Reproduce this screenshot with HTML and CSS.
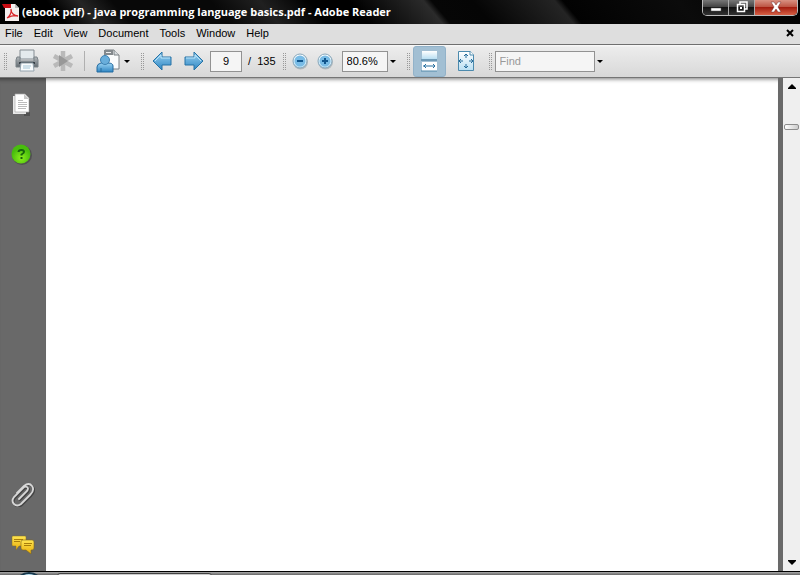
FILE: index.html
```html
<!DOCTYPE html>
<html lang="en">
<head>
<meta charset="utf-8">
<title>(ebook pdf) - java programming language basics.pdf - Adobe Reader</title>
<link rel="stylesheet" href="styles.css">
</head>
<body>
<svg class="defs" aria-hidden="true">
  <defs>
    <linearGradient id="blue" x1="0" y1="0" x2="0" y2="1"><stop offset="0" stop-color="#9bd3f3"/><stop offset="1" stop-color="#2f86c2"/></linearGradient>
    <linearGradient id="pale" x1="0" y1="0" x2="0" y2="1"><stop offset="0" stop-color="#ffffff"/><stop offset="1" stop-color="#b9dff3"/></linearGradient>
    <linearGradient id="gray" x1="0" y1="0" x2="0" y2="1"><stop offset="0" stop-color="#b4b9bc"/><stop offset="1" stop-color="#626a70"/></linearGradient>
    <linearGradient id="gold" x1="0" y1="0" x2="0" y2="1"><stop offset="0" stop-color="#ffe552"/><stop offset="1" stop-color="#e9ae09"/></linearGradient>
    <radialGradient id="green" cx="50%" cy="70%"><stop offset="0" stop-color="#8bef1c"/><stop offset="1" stop-color="#48bd0d"/></radialGradient>
  </defs>
</svg>
<div class="window">
  <header class="titlebar">
    <svg class="app-icon" width="18" height="18" viewBox="0 0 18 18" aria-hidden="true">
      <path d="M3 1h10l4 4v13H3z" fill="#f4eeee"/><path d="M13 1v4h4z" fill="#b9b9b9"/>
      <path d="M0 1h9v4H2z" fill="#c90d14"/>
      <path d="M5 15c2-1 5-5 4-9 0 4 3 7 7 7-4-1-7 0-11 2z" fill="none" stroke="#d8262b" stroke-width="1.3"/>
    </svg>
    <h1>(ebook pdf) - java programming language basics.pdf - Adobe Reader</h1>
    <div class="controls">
      <button class="min" aria-label="Minimize"><svg width="12" height="12"><path d="M1 7h10v3H1z" fill="#fff" stroke="#555" stroke-width=".5"/></svg></button>
      <button class="max" aria-label="Restore"><svg width="12" height="12"><path d="M4 3V1h7v7H9M1.500 3.500h7v7h-7z" fill="none" stroke="#fff" stroke-width="1.500"/><path d="M4 6h2v2H4z" fill="#fff"/></svg></button>
      <button class="close" aria-label="Close"><svg width="14" height="12"><path d="M2 1h3l2 3 2-3h3L9 6l3 5H9L7 8l-2 3H2l3-5z" fill="#fff" stroke="#733" stroke-width=".5"/></svg></button>
    </div>
  </header>

  <nav class="menubar">
    <button>File</button><button>Edit</button><button>View</button><button>Document</button><button>Tools</button><button>Window</button><button>Help</button>
    <button class="doc-close" aria-label="Close document"><svg width="8" height="8"><path d="M1 1l6 6M7 1L1 7" stroke="#000" stroke-width="2"/></svg></button>
  </nav>

  <div class="toolbar">
    <div class="group file">
      <span class="grip"></span>
      <button class="tool" aria-label="Print"><svg width="24" height="24" viewBox="0 0 24 24">
        <path d="M5 1h14v9H5z" fill="#e4eaed" stroke="#858d93"/>
        <path d="M2 8h3v4h14V8h3l1 3v7H1v-7z" fill="url(#gray)" stroke="#7b8388"/>
        <path d="M4 14h16" stroke="#394249" stroke-width="2"/>
        <path d="M6 14h12l1 8H5z" fill="#f9fcfd" stroke="#93a2ac"/><path d="M8 17h8M8 19h7" stroke="#a3c5d6"/></svg></button>
      <button class="tool" aria-label="Create"><svg width="24" height="24" viewBox="0 0 24 24">
        <path d="M12 2v20M3 7l18 10M21 7L3 17" stroke="#b9b9b9" stroke-width="4.500"/><path d="M8 6l9 6-9 6z" fill="#989898"/></svg></button>
      <span class="rule"></span>
      <button class="tool collab" aria-label="Collaborate"><svg width="24" height="24" viewBox="0 0 24 24">
        <path d="M9 1h9l5 5v14H9z" fill="#fafcfd" stroke="#7a8185"/><path d="M18 1v5h5" fill="#d7dcdf" stroke="#7a8185"/><path d="M8 1h9v5H8z" fill="#83898d"/><path d="M10 3.500h5" stroke="#eee"/>
        <path d="M1 23v-5q0-3 4-4h7q5 0 5 3v6z" fill="url(#blue)" stroke="#226aa0"/><circle cx="9" cy="11" r="4.500" fill="#69aedb" stroke="#3f82b2"/><path d="M5 19v4" stroke="#246a9d"/></svg><i class="caret"></i></button>
    </div>
    <div class="group nav">
      <span class="grip"></span>
      <button class="tool arrow" aria-label="Previous page"><svg width="20" height="20" viewBox="0 0 20 20"><path d="M1 10l9-9v5h9v8h-9v5z" fill="url(#blue)" stroke="#2673a6" stroke-linejoin="round"/><path d="M3 10l6-6v3h9" fill="none" stroke="#b9e3f8"/></svg></button>
      <button class="tool arrow" aria-label="Next page"><svg width="20" height="20" viewBox="0 0 20 20"><path d="M19 10l-9-9v5H1v8h9v5z" fill="url(#blue)" stroke="#2673a6" stroke-linejoin="round"/><path d="M2 7h9V4l6 6" fill="none" stroke="#b9e3f8"/></svg></button>
      <input class="field page" aria-label="Page number" value="9">
      <span class="total">/&nbsp; 135</span>
    </div>
    <div class="group zoom">
      <span class="grip"></span>
      <button class="tool round" aria-label="Zoom out"><svg width="18" height="18" viewBox="0 0 18 18"><circle cx="9.500" cy="10" r="7.500" fill="#b3b9bd"/><circle cx="9" cy="9" r="7" fill="url(#pale)" stroke="#86a7bb"/><circle cx="9" cy="9" r="5.500" fill="#79bce6"/><path d="M6 9h6" stroke="#11568d" stroke-width="2"/></svg></button>
      <button class="tool round" aria-label="Zoom in"><svg width="18" height="18" viewBox="0 0 18 18"><circle cx="9.500" cy="10" r="7.500" fill="#b3b9bd"/><circle cx="9" cy="9" r="7" fill="url(#pale)" stroke="#86a7bb"/><circle cx="9" cy="9" r="5.500" fill="#79bce6"/><path d="M6 9h6M9 6v6" stroke="#11568d" stroke-width="2"/></svg></button>
      <input class="field percent" aria-label="Zoom level" value="80.6%">
      <button class="drop" aria-label="Zoom levels"><i class="caret"></i></button>
    </div>
    <div class="group view">
      <span class="grip"></span>
      <button class="tool active" aria-label="Scrolling pages" aria-pressed="true"><svg width="20" height="22" viewBox="0 0 20 22"><path d="M3 1h15v8H3z" fill="url(#pale)"/><path d="M2 10h16" stroke="#397396"/><path d="M3 12h15v9H3z" fill="#fff"/><path d="M2 21h16" stroke="#5289aa"/><path d="M4 16h12M7 14l-2 2 2 2M14 14l2 2-2 2" fill="none" stroke="#266f9f"/></svg></button>
      <button class="tool fit" aria-label="Fit one page"><svg width="20" height="22" viewBox="0 0 20 22"><path d="M2.500 1.500h12l3 3v16h-15z" fill="url(#pale)" stroke="#4c8aad"/><path d="M14 1v4h4" fill="#fff" stroke="#4c8aad"/><path d="M10 4v4M8 6l2-2 2 2M10 18v-4M8 16l2 2 2-2M3 11h4M5 9l-2 2 2 2M17 11h-4M15 9l2 2-2 2" fill="none" stroke="#246b99"/></svg></button>
    </div>
    <div class="group find">
      <span class="grip"></span>
      <input class="field search" aria-label="Find" placeholder="Find">
      <button class="drop" aria-label="Find options"><i class="caret"></i></button>
    </div>
  </div>

  <main class="workspace">
    <aside class="sidebar">
      <button aria-label="Pages"><svg width="24" height="24" viewBox="0 0 24 24"><path d="M4 7h9v17h6V7" fill="#515151"/><path d="M2 4h13v18H2z" fill="#e8e8e8"/><path d="M4 2h10l4 4v14H4z" fill="#fff" stroke="#aaa" stroke-width=".7"/><path d="M13 2v5h5z" fill="#c6c6c6"/><path d="M7 8.500h5M7 10.500h9M7 12.500h9M7 14.500h9M7 16.500h8" stroke="#bbb"/></svg></button>
      <button aria-label="How to"><svg width="24" height="24" viewBox="0 0 24 24"><circle cx="11" cy="13" r="10" fill="#505050"/><circle cx="10" cy="12" r="9.500" fill="url(#green)"/><path d="M7.500 10q0-2 3-2 2.500 0 2.500 2 0 1-2.500 2.500v1" fill="none" stroke="#17650c" stroke-width="2"/><path d="M9.500 15h2v2h-2z" fill="#17650c"/></svg></button>
      <button class="attach" aria-label="Attachments"><svg width="24" height="24" viewBox="0 0 24 24"><g fill="none" stroke-linecap="round"><path d="M8 16l8-8q2-3 0-4t-4 1L3 14q-3 4 0 7t7 0l9-9q5-5 2-9t-8 0L6 10" transform="translate(1 1)" stroke="#444" stroke-width="2"/><path d="M8 16l8-8q2-3 0-4t-4 1L3 14q-3 4 0 7t7 0l9-9q5-5 2-9t-8 0L6 10" stroke="#d8d8d8" stroke-width="1.800"/></g></svg></button>
      <button aria-label="Comments"><svg width="24" height="24" viewBox="0 0 24 24"><path d="M2 3h12q1 0 1 1v8q0 1-1 1H8l-3 4v-4H2q-1 0-1-1V4q0-1 1-1z" fill="url(#gold)" stroke="#806c27" stroke-width=".5"/><path d="M3 6.500h9M3 8.500h6" stroke="#a77d0b"/><path d="M12 7h9q2 0 2 2v6q0 2-2 2h-1v4l-5-4h-3q-2 0-2-2V9q0-2 2-2z" fill="url(#gold)" stroke="#80671b" stroke-width=".6"/><path d="M13 10.500h8M13 12.500h7" stroke="#a77d0b"/></svg></button>
    </aside>
    <section class="page-area" aria-label="Document page"></section>
    <div class="scrollbar">
      <button aria-label="Scroll up"><svg width="8" height="5"><path d="M4 0l4 4v1H0V4z"/></svg></button>
      <span class="thumb"></span>
      <button class="down" aria-label="Scroll down"><svg width="8" height="5"><path d="M0 0h8v1L4 5 0 1z"/></svg></button>
    </div>
  </main>
  <footer class="taskbar"><span class="start"></span><span class="task"></span></footer>
</div>
</body>
</html>
```
FILE: styles.css
```css
* { box-sizing: border-box; }
html, body { height: 100%; margin: 0; }
body { font: 11px/14px "Liberation Sans", Arial, sans-serif; color: #000; overflow: hidden; }
button { font: inherit; color: inherit; border: 0; padding: 0; background: none; display: flex; align-items: center; justify-content: center; }
svg { display: block; flex: none; }
.defs { position: absolute; width: 0; height: 0; }
.window { height: 100%; display: flex; flex-direction: column; }

.titlebar {
  flex: none; height: 24px; display: flex; align-items: center; padding-left: 2px; gap: 2px;
  background: linear-gradient(50deg, #000 8%, #252525 12%, #080808 16%, #080808 28%, #202020 34%, #000 40%, #000 45%, #2b2b2b 54%, #060606 55%, #050505 60%, #242424 70%, #020202 71%, #0b0b0b 85%, #000);
}
.titlebar h1 { flex: 1; margin: 0; font-size: 11px; line-height: 14px; font-weight: bold; color: #fff; font-family: "Open Sans", "Noto Sans", sans-serif; white-space: nowrap; }
.controls { align-self: flex-start; display: flex; height: 16px; margin-right: 2px; border: 1px solid #bbb; border-top: 0; border-radius: 0 0 5px 5px; overflow: hidden; }
.controls button { width: 26px; background: linear-gradient(#777, #444 45%, #111 50%, #333); border-right: 1px solid #aaa; padding-bottom: 2px; }
.controls .close { width: 42px; border-right: 0; background: linear-gradient(#d89182, #bd5544 45%, #a41e10 50%, #d66045); }

.menubar { flex: none; height: 21px; display: flex; align-items: center; gap: 11px; padding: 0 6px 2px 5px; background: #dedede; border-bottom: 1px solid #6f6f6f; }
.menubar .doc-close { margin-left: auto; }

.toolbar { flex: none; height: 33px; display: flex; align-items: stretch; background: linear-gradient(#fafafa, #ececec 8%, #d8d8d8); border-bottom: 1px solid #757575; padding-left: 3px; }
.group { display: flex; align-items: center; }
.grip { flex: none; width: 4px; height: 17px; background: conic-gradient(#999 25%, transparent 0) 0 0 / 2px 2px; }
.rule { width: 1px; height: 20px; background: #b0b0b0; margin: 0 3px; }
.tool { width: 36px; height: 31px; flex: none; }
.collab { gap: 4px; width: 50px; }
.caret { width: 0; height: 0; border: 3px solid transparent; border-top-color: #000; border-bottom: 0; }
.file .grip { margin-right: 2px; }
.nav { margin-left: 2px; }
.nav .arrow { width: 32px; }
.nav .grip { margin-right: 2px; }
.field { font: inherit; height: 21px; margin: 0; padding: 0 4px; border: 1px solid #929292; border-radius: 0; background: #f5f5f5; color: #000; outline: 0; }
.page { width: 32px; text-align: center; }
.total { margin: 0 6px; }
.round { width: 25px; }
.zoom .grip { margin-right: 2px; }
.percent { width: 46px; margin-left: 4px; }
.drop { width: 10px; height: 21px; }
.view { margin-left: 8px; }
.active { width: 33px; height: 31px; margin-left: 3px; border-radius: 3px; background: #a2bfd3; border: 1px solid #92b2c9; }
.fit { width: 40px; }
.find { margin-left: 2px; }
.search { width: 100px; margin-left: 3px; }
.search::placeholder { color: #999; opacity: 1; }

.workspace { flex: 1; min-height: 0; display: flex; background: #696969; }
.sidebar { flex: none; width: 46px; padding: 14px 0; display: flex; flex-direction: column; align-items: center; gap: 26px; box-shadow: inset 0 5px 4px -4px #333; }
.sidebar .attach { margin-top: auto; }
.page-area { flex: 1; background: #fff; box-shadow: inset 0 5px 4px -4px #777; }
.scrollbar { flex: none; width: 17px; margin-left: 5px; background: #efefef; display: flex; flex-direction: column; align-items: center; }
.scrollbar button { width: 17px; height: 17px; }
.thumb { width: 15px; height: 6px; margin-top: 29px; border: 1px solid #8c8c8c; border-radius: 2px; background: linear-gradient(90deg, #fff, #ccc); }
.scrollbar .down { margin-top: auto; }

.taskbar { flex: none; height: 4px; display: flex; border-top: 1px solid #000; background: linear-gradient(#aaa, #666); overflow: hidden; }
.start { width: 30px; height: 30px; margin-left: 14px; border: 2px solid #17374b; border-radius: 50%; background: #b9deef; flex: none; }
.task { width: 155px; height: 20px; margin: 1px 0 0 13px; border: 1px solid #444; border-radius: 3px; background: #ccc; }
```
